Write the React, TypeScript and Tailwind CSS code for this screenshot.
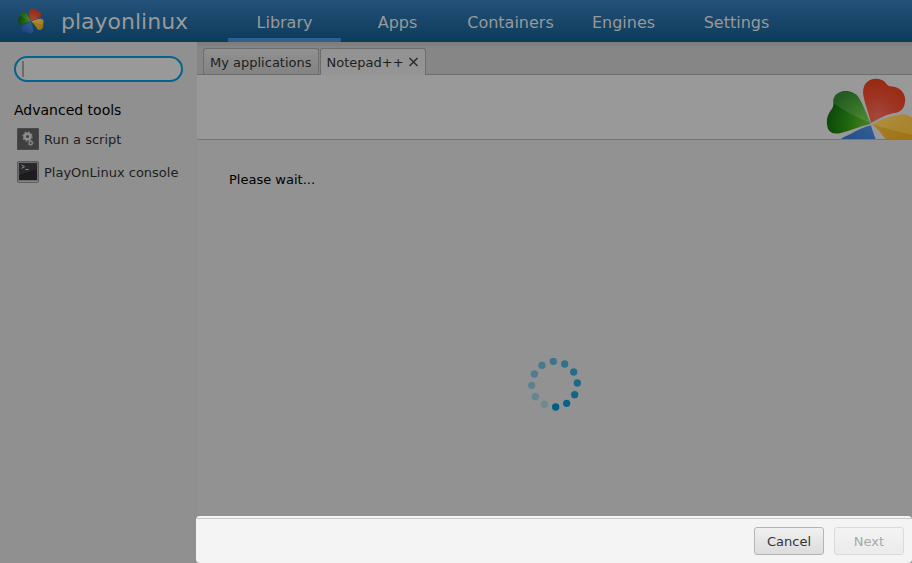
function Clover({ id, viewBox, className }: { id: string; viewBox: string; className: string }) {
  return (
    <svg viewBox={viewBox} className={className} preserveAspectRatio="xMinYMin meet" aria-hidden="true">
      <defs>
        <radialGradient id={`${id}-green`} cx="0.95" cy="0.8" r="0.95">
          <stop offset="0" stopColor="#438222" />
          <stop offset="0.5" stopColor="#21670f" />
          <stop offset="1" stopColor="#0b480a" />
        </radialGradient>
        <radialGradient id={`${id}-red`} cx="0.35" cy="0.9" r="0.9">
          <stop offset="0" stopColor="#a5493c" />
          <stop offset="0.55" stopColor="#9d3423" />
          <stop offset="1" stopColor="#98290f" />
        </radialGradient>
        <linearGradient id={`${id}-yellow`} x1="0" y1="0" x2="1" y2="1">
          <stop offset="0" stopColor="#a5842c" />
          <stop offset="1" stopColor="#9e6c08" />
        </linearGradient>
        <linearGradient id={`${id}-blue`} x1="1" y1="0" x2="0.3" y2="1">
          <stop offset="0" stopColor="#33619a" />
          <stop offset="1" stopColor="#1b4279" />
        </linearGradient>
      </defs>
      <path
        d="M173 162C160 130 150 104 138 84C127 67 108 61 89 64C69 68 59 83 61 99C62 112 55 119 49 128C41 141 40 158 44 173C49 188 64 193 81 190C109 183 139 169 173 162Z"
        fill={`url(#${id}-green)`}
      />
      <path d="M62 100C58 82 72 65 92 64C112 62 130 70 140 88C151 110 162 136 172 160C135 144 98 126 62 100Z" fill="#fff" opacity="0.1" />
      <path
        d="M174 159C169 132 155 103 151 75C147 49 160 30 182 27C199 25 212 31 220 41C228 52 240 47 253 53C270 61 279 78 276 97C273 116 264 126 246 129C220 133 199 145 174 159Z"
        fill={`url(#${id}-red)`}
      />
      <path
        d="M178 162C203 150 235 136 263 134C285 132 301 141 303 158C305 171 297 179 299 191C302 210 296 233 279 244C260 256 241 247 232 229C218 205 198 181 178 162Z"
        fill={`url(#${id}-yellow)`}
      />
      <path d="M178 162C215 145 252 131 278 135C296 138 304 150 302 168C301 180 300 187 300 196C259 185 215 175 178 162Z" fill="#fff" opacity="0.1" />
      <path
        d="M174 166C180 190 193 215 196 238C199 262 190 280 171 286C155 290 143 286 134 277C125 270 113 276 100 270C80 260 70 242 75 220C80 204 98 199 114 191C134 181 153 171 174 166Z"
        fill={`url(#${id}-blue)`}
      />
    </svg>
  );
}

const spinnerDots = [
  { x: 122, y: 186, color: "#005f86" },
  { x: 155, y: 175, color: "#07618a" },
  { x: 179, y: 149, color: "#12668a" },
  { x: 187, y: 114, color: "#1c6988" },
  { x: 176, y: 81, color: "#266d8a" },
  { x: 149, y: 57, color: "#31718b" },
  { x: 115, y: 49, color: "#3b758c" },
  { x: 81, y: 61, color: "#467a8d" },
  { x: 58, y: 87, color: "#507d8e" },
  { x: 50, y: 121, color: "#5a818f" },
  { x: 61, y: 155, color: "#658590" },
  { x: 88, y: 178, color: "#6f8991" },
];

function Spinner() {
  return (
    <svg viewBox="39 39 159 159" className="size-[53px]" role="img" aria-label="Loading">
      {spinnerDots.map((dot) => (
        <circle key={dot.x} cx={dot.x} cy={dot.y} r="11" fill={dot.color} />
      ))}
    </svg>
  );
}

function ScriptIcon() {
  return (
    <svg viewBox="0 0 22 22" className="size-[22px] shrink-0" aria-hidden="true">
      <rect x="0" y="0" width="22" height="22" rx="1.5" fill="#3f3f3f" />
      <rect x="0.5" y="0.5" width="21" height="21" rx="1" fill="none" stroke="#4a4a4a" />
      <circle cx="10.5" cy="8.5" r="2.8" fill="none" stroke="#8d8d8d" strokeWidth="2.6" />
      <circle cx="10.5" cy="8.5" r="4.5" fill="none" stroke="#8d8d8d" strokeWidth="1.2" strokeDasharray="1.8 1.73" />
      <circle cx="13.7" cy="15" r="1.6" fill="none" stroke="#858585" strokeWidth="1.4" />
      <circle cx="13.7" cy="15" r="2.6" fill="none" stroke="#858585" strokeWidth="0.8" strokeDasharray="1 1" />
    </svg>
  );
}

function ConsoleIcon() {
  return (
    <svg viewBox="0 0 22 22" className="size-[22px] shrink-0" aria-hidden="true">
      <rect x="0.5" y="0.5" width="21" height="21" rx="1.5" fill="#6f6f6f" stroke="#5c5c5c" />
      <rect x="2" y="2" width="18" height="17" fill="#1c1b1f" />
      <path d="M2 2h18v6L2 14z" fill="#29282c" />
      <path d="M4.500 4l3 1.700-3 1.700M8.500 8.500h3" fill="none" stroke="#909090" />
      <path d="M1 20.500h20" stroke="#858585" />
    </svg>
  );
}

function CloseIcon() {
  return (
    <svg viewBox="0 0 12 12" className="size-3" aria-hidden="true">
      <path d="M2.500 2l8 8M10.500 2l-8 8" fill="none" stroke="#2e2e2e" strokeWidth="1.5" />
    </svg>
  );
}

const sections = ["Library", "Apps", "Containers", "Engines", "Settings"];

export default function App() {
  return (
    <div className="flex min-h-screen flex-col bg-[#929292] font-['DejaVu_Sans',sans-serif] text-[13px] leading-4 text-[#1e1e1e]">
      <header className="flex h-[42px] bg-linear-to-b from-[#245179] to-[#0a3c5b] text-[#999999]">
        <div className="flex w-[228px] shrink-0 items-center gap-[17px] pl-[18px]">
          <Clover id="logo" viewBox="40 22 268 268" className="size-[26px]" />
          <span className="pt-[2px] text-[22px] leading-6">playonlinux</span>
        </div>
        <nav className="flex">
          {sections.map((name) => (
            <button
              key={name}
              type="button"
              className={
                name === "Library"
                  ? "w-[113px] border-b-4 border-[#315f8d] pt-[7px] text-base"
                  : "w-[113px] border-b-4 border-transparent pt-[7px] text-base"
              }
            >
              {name}
            </button>
          ))}
        </nav>
      </header>

      <div className="flex flex-1">
        <aside className="w-[197px] shrink-0 bg-[#909090] px-[14px] pt-[14px]">
          <div className="relative">
            <input
              type="text"
              aria-label="Search"
              className="block h-[26px] w-[169px] rounded-full border-2 border-[#04648b] bg-[#999999] px-2 outline-none"
            />
            <span className="absolute top-[5px] left-2 h-4 w-[2px] bg-[#6b6b6b]" />
          </div>
          <h2 className="mt-5 text-sm leading-4 text-black">Advanced tools</h2>
          <ul className="mt-[10px] flex flex-col gap-[11px] pl-[3px]">
            <li>
              <button type="button" className="flex items-center gap-[5px] whitespace-nowrap">
                <ScriptIcon />
                <span className="pt-[2px]">Run a script</span>
              </button>
            </li>
            <li>
              <button type="button" className="flex items-center gap-[5px] whitespace-nowrap">
                <ConsoleIcon />
                <span className="pt-[2px]">PlayOnLinux console</span>
              </button>
            </li>
          </ul>
        </aside>

        <main className="flex min-w-0 flex-1 flex-col">
          <div className="flex h-[33px] items-end gap-px border-b border-[#6d6d6d] bg-linear-to-b from-[#7c7c7c] to-[#868686] to-20% px-[6px]">
            <button
              type="button"
              className="h-[26px] rounded-t-[3px] border border-b-0 border-[#6d6d6d] bg-linear-to-b from-[#919191] to-[#838383] px-[6px] pt-[2px]"
            >
              My applications
            </button>
            <div className="-mb-px flex h-[27px] items-center gap-[3px] rounded-t-[3px] border border-b-0 border-[#6d6d6d] bg-linear-to-b from-[#929292] to-[#959595] px-[6px]">
              <button type="button" className="pt-[2px]">
                Notepad++
              </button>
              <button type="button" aria-label="Close Notepad++">
                <CloseIcon />
              </button>
            </div>
          </div>

          <div className="flex h-[65px] justify-end border-b border-[#767676] bg-[#999999]">
            <Clover id="banner" viewBox="36 15 260 192" className="h-[64px] w-[87px]" />
          </div>

          <p className="px-8 pt-8 pb-[65px] text-black">Please wait...</p>
          <div className="flex flex-1 items-center justify-center">
            <Spinner />
          </div>

          <footer className="-ml-px h-[47px] rounded-[4px] bg-[#f4f4f4] pt-[2px]">
            <div className="flex justify-end gap-[10px] border-t border-[#c8c8c8] pt-2 pr-2">
              <button
                type="button"
                className="h-7 w-[70px] rounded-[3px] border border-[#b4b4b4] bg-linear-to-b from-[#f0f0f0] to-[#dcdcdc] pt-[2px] text-[#333333]"
              >
                Cancel
              </button>
              <button
                type="button"
                disabled
                className="h-7 w-[70px] rounded-[3px] border border-[#dadada] bg-linear-to-b from-[#f3f3f3] to-[#ebebeb] pt-[2px] text-[#a9a9a9]"
              >
                Next
              </button>
            </div>
          </footer>
        </main>
      </div>
    </div>
  );
}
